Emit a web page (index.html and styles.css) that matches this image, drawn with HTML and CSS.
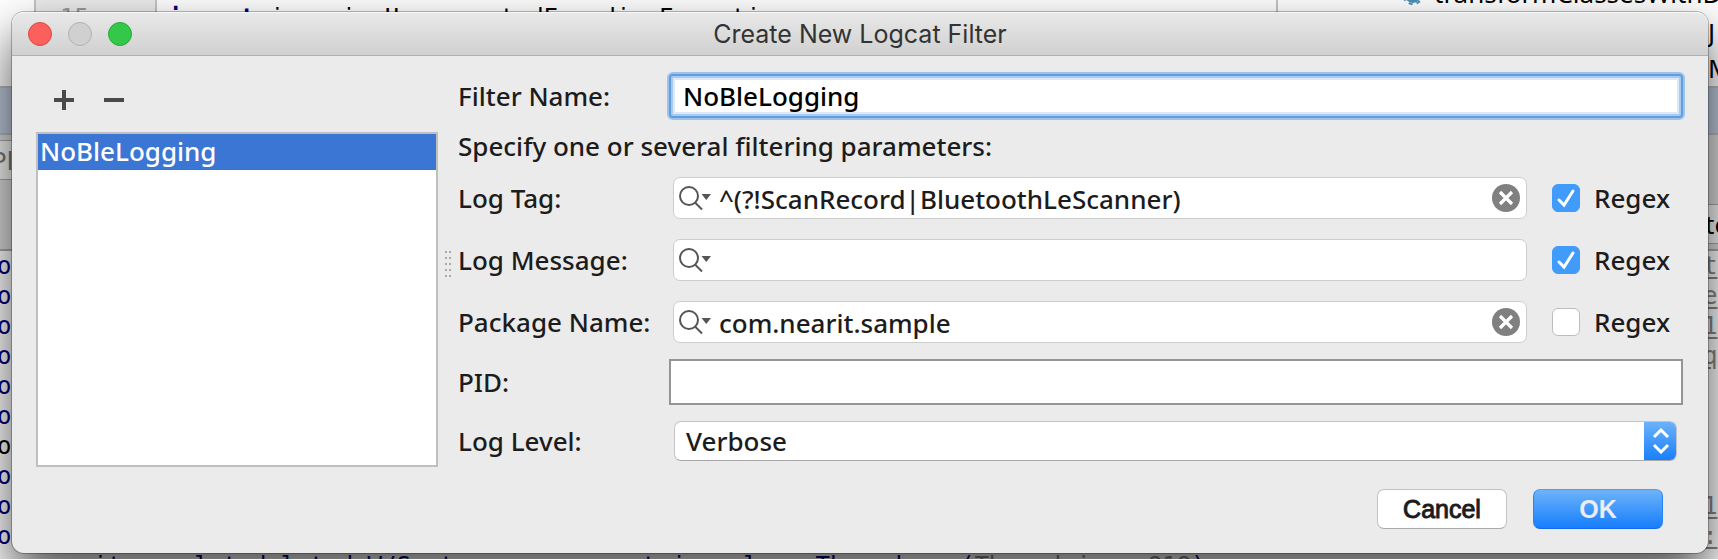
FILE: index.html
```
<!DOCTYPE html>
<html lang="en">
<head>
<meta charset="utf-8">
<title>Create New Logcat Filter</title>
<link rel="stylesheet" href="styles.css">
</head>
<body>
<svg class="defs" width="0" height="0" aria-hidden="true">
  <symbol id="search" viewBox="0 0 32 26">
    <circle cx="10" cy="11" r="9" fill="none" stroke="#555" stroke-width="2"/>
    <path d="M16 17.500L23 24.500" stroke="#555" stroke-width="2"/>
    <path d="M22.500 9H32L27.250 15Z" fill="#555"/>
  </symbol>
  <symbol id="clear" viewBox="0 0 28 28">
    <circle cx="14" cy="14" r="14" fill="#808080"/>
    <path d="M8 8L20 20M20 8L8 20" stroke="#fff" stroke-width="3.200"/>
  </symbol>
</svg>

<div class="ide">
  <div class="editor">
    <div class="gutter">15</div>
    <div class="code"><b>import</b> java.io.UnsupportedEncodingException;</div>
    <div class="tasks">
      <div class="task"><svg width="22" height="24" viewBox="0 0 22 24"><circle cx="11" cy="12" r="6" fill="none" stroke="#4c93b8" stroke-width="6"/><circle cx="11" cy="12" r="10" fill="none" stroke="#4c93b8" stroke-width="2" stroke-dasharray="4 4"/></svg>transformClassesWithD</div>
      <div class="task-edge">J</div>
      <div class="task-edge">M</div>
    </div>
  </div>
  <div class="tool-header"></div>
  <div class="tool-tabs">
    <div class="tabs-left"><span>Pl</span></div>
    <div class="tabs-right"><span>te</span></div>
  </div>
  <div class="console">
    <div class="line"><span>or</span><u>t</u></div>
    <div class="line"><span>or</span><u>e</u></div>
    <div class="line"><span>or</span><u>1</u></div>
    <div class="line"><span>or</span><u>q</u></div>
    <div class="line"><span>or</span></div>
    <div class="line"><span>or</span></div>
    <div class="line plain"><span>or</span></div>
    <div class="line"><span>or</span></div>
    <div class="line"><span>or</span><u>1</u></div>
    <div class="line"><span>or</span><u>:</u></div>
    <div class="line trace">it.completedeleted W/System.err:     at java.lang.Thread.run(<i>Thread.java:818</i>)</div>
  </div>
</div>

<form class="dialog">
  <header class="titlebar">
    <div class="lights">
      <button type="button" class="light close" aria-label="Close"></button>
      <button type="button" class="light minimize" aria-label="Minimize" disabled></button>
      <button type="button" class="light zoom" aria-label="Zoom"></button>
    </div>
    <h1>Create New Logcat Filter</h1>
  </header>

  <div class="content">
    <section class="filters">
      <div class="toolbar">
        <button type="button" aria-label="Add"><svg width="20" height="20"><path d="M0 10H20M10 0V20" stroke="#4a4a4a" stroke-width="4"/></svg></button>
        <button type="button" aria-label="Remove"><svg width="20" height="20"><path d="M0 10H20" stroke="#4a4a4a" stroke-width="4"/></svg></button>
      </div>
      <ul class="list"><li>NoBleLogging</li></ul>
    </section>

    <div class="splitter"><span class="grip"></span></div>

    <section class="fields">
      <div class="row name-row">
        <label for="name">Filter Name:</label>
        <input id="name" class="text focused" type="text" value="NoBleLogging">
      </div>
      <p class="hint">Specify one or several filtering parameters:</p>
      <div class="row search-row">
        <label for="tag">Log Tag:</label>
        <div class="search">
          <svg width="32" height="26"><use href="#search"/></svg>
          <input id="tag" type="text" value="^(?!ScanRecord|BluetoothLeScanner)">
          <button type="button" aria-label="Clear"><svg width="28" height="28"><use href="#clear"/></svg></button>
        </div>
        <label class="regex"><input type="checkbox" checked>Regex</label>
      </div>
      <div class="row search-row">
        <label for="message">Log Message:</label>
        <div class="search">
          <svg width="32" height="26"><use href="#search"/></svg>
          <input id="message" type="text">
        </div>
        <label class="regex"><input type="checkbox" checked>Regex</label>
      </div>
      <div class="row search-row">
        <label for="package">Package Name:</label>
        <div class="search">
          <svg width="32" height="26"><use href="#search"/></svg>
          <input id="package" type="text" value="com.nearit.sample">
          <button type="button" aria-label="Clear"><svg width="28" height="28"><use href="#clear"/></svg></button>
        </div>
        <label class="regex"><input type="checkbox">Regex</label>
      </div>
      <div class="row pid-row">
        <label for="pid">PID:</label>
        <input id="pid" class="text" type="text">
      </div>
      <div class="row level-row">
        <label for="level">Log Level:</label>
        <div class="combo">
          <select id="level"><option>Verbose</option></select>
          <span class="arrows"><svg width="18" height="26" viewBox="0 0 18 26"><path d="M2 9L9 2L16 9M2 17L9 24L16 17" fill="none" stroke="#fff" stroke-width="3"/></svg></span>
        </div>
      </div>
    </section>
  </div>

  <footer class="actions">
    <button type="button" class="btn">Cancel</button>
    <button type="submit" class="btn primary">OK</button>
  </footer>
</form>
</body>
</html>
```
FILE: styles.css
```
* { box-sizing: border-box; }
body {
  margin: 0;
  position: relative;
  overflow: hidden;
  background: #fff;
  color: #1c1c1c;
  font: 500 26px/32px "Noto Sans", "Open Sans", sans-serif;
}
button { padding: 0; border: 0; background: none; }
svg { display: block; flex: none; }
input, select { font: inherit; color: inherit; min-width: 0; }
.defs { position: absolute; }

/* IDE window behind the dialog */
.ide {
  position: absolute;
  inset: 0;
  display: flex;
  flex-direction: column;
  overflow: hidden;
  font-weight: 400;
}
.editor {
  display: flex;
  height: 86px;
  flex: none;
  padding-left: 34px;
  font: 24px/32px "DejaVu Sans Mono", monospace;
  color: #000;
}
.gutter {
  width: 123px;
  padding: 2px 0 0 24px;
  background: #ececec;
  border: solid #c4c4c4;
  border-width: 0 2px;
  color: #999;
}
.code { flex: 1; padding: 2px 0 0 11px; white-space: pre; }
.code b { color: #000080; }
.tasks {
  width: 442px;
  flex: none;
  overflow: hidden;
  border-left: 2px solid #c4c4c4;
  font: 26px/36px "Noto Sans", sans-serif;
}
.task { display: flex; align-items: center; gap: 10px; height: 15px; padding-left: 124px; line-height: 15px; margin-top: -14px; }
.task-edge { padding-left: 430px; height: 36px; }
.task + .task-edge { margin-top: 13px; }
.tool-header { height: 49px; flex: none; background: #bfc9dc; border: solid #bbb; border-width: 2px 0; }
.tool-tabs { display: flex; justify-content: space-between; height: 116px; flex: none; background: #ddd; }
.tabs-left, .tabs-right { color: #777; border-bottom: 2px solid #aaa; }
.tabs-left { width: 100px; padding-top: 5px; }
.tabs-left span { display: block; height: 40px; padding-top: 3px; text-indent: -9px; background: #f5f5f5; border: solid #aaa; border-width: 1px 0; }
.tabs-right { width: 10px; padding-top: 69px; color: #000; }
.tabs-right span { display: block; height: 40px; padding-top: 3px; text-indent: -3px; background: #f5f5f5; border: solid #aaa; border-width: 1px 0; }
.console { flex: none; background: #fff; font: 24px/30px "DejaVu Sans Mono", monospace; color: #000080; }
.line { display: flex; justify-content: space-between; height: 30px; text-indent: -3px; }
.line u { width: 11px; color: #888; text-indent: -4px; text-underline-offset: 3px; }
.plain { color: #000; }
.trace { display: block; padding-left: 96px; white-space: pre; }
.trace i { font-style: normal; color: #888; }

/* Dialog window */
.dialog {
  position: relative;
  margin: 12px 10px 6px 12px;
  padding-bottom: 24px;
  background: #ebebeb;
  border-radius: 12px;
  box-shadow: 0 0 0 1px rgba(0, 0, 0, .25), 0 24px 50px rgba(0, 0, 0, .7);
}
.titlebar {
  display: grid;
  grid-template-columns: 1fr auto 1fr;
  align-items: center;
  height: 44px;
  padding: 0 16px;
  border-bottom: 1px solid #b0b0b0;
  border-radius: 12px 12px 0 0;
  background: linear-gradient(#e9e9e9, #d0d0d0);
  box-shadow: inset 0 1px #f6f6f6;
}
.titlebar h1 { margin: 0; font: 400 25px/32px Inter, sans-serif; color: #333; }
.lights { display: flex; gap: 16px; }
.light { width: 24px; height: 24px; border-radius: 50%; }
.close { background: #fc605c; border: 1px solid #df4744; }
.minimize { background: #d0d0d0; border: 1px solid #b2b2b2; }
.zoom { background: #34c84a; border: 1px solid #27aa35; }

.content { display: flex; padding: 0 25px 0 24px; }
.filters { display: flex; flex-direction: column; width: 402px; padding-bottom: 4px; }
.toolbar { display: flex; gap: 30px; height: 76px; padding: 12px 18px 0; align-items: center; }
.list {
  flex: 1;
  margin: 0;
  padding: 0;
  list-style: none;
  background: #fff;
  border: 2px solid #bfbfbf;
}
.list li { height: 36px; padding: 1px 2px; background: #3c76d4; color: #fff; }
.splitter { display: flex; align-items: center; justify-content: center; width: 20px; }
.grip {
  width: 8px;
  height: 30px;
  background: radial-gradient(circle, #aaa 1px, transparent 1px) 0 0 / 4px 6px;
}

.fields { flex: 1; min-width: 0; padding-top: 16px; }
.row { display: grid; grid-template-columns: 211px 1fr; align-items: center; }
.name-row { height: 47px; }
.text {
  height: 46px;
  padding: 0 12px;
  background: #fff;
  border: 2px solid #949494;
  border-radius: 0;
  outline: none;
}
.text.focused {
  height: 44px;
  color: #000;
  border-color: #629edd;
  border-radius: 4px;
  box-shadow: 0 0 0 2px #9cc3ee, inset 0 0 0 2px #a9cbf0, inset 0 0 0 4px #dce9f8;
}
.hint { margin: 0; height: 48px; padding-top: 11px; }
.search-row { grid-template-columns: 211px 1fr 156px; padding: 10px 0; }
.search {
  display: flex;
  align-items: center;
  gap: 8px;
  height: 42px;
  margin-left: 4px;
  padding: 0 6px 0 5px;
  background: #fff;
  border: 1px solid #cdcdcd;
  border-radius: 7px;
}
.search input { flex: 1; height: 38px; padding: 2px 0 0; border: 0; background: none; outline: none; }
.regex { display: flex; align-items: center; gap: 14px; padding-left: 25px; }
.regex input {
  appearance: none;
  width: 28px;
  height: 28px;
  margin: 0;
  background: #fff;
  border: 1px solid #bdbdbd;
  border-radius: 6px;
}
.regex input:checked {
  border-color: #409bfa;
  background: #409bfa url("data:image/svg+xml,%3Csvg xmlns='http://www.w3.org/2000/svg' viewBox='0 0 26 26'%3E%3Cpath d='M6 15L11 20L20 6' fill='none' stroke='white' stroke-width='3' stroke-linecap='round'/%3E%3C/svg%3E") center / 26px;
}
.pid-row { padding: 6px 0; }
.level-row { padding: 10px 0; }
.combo {
  display: flex;
  height: 40px;
  margin: 0 6px 0 5px;
  overflow: hidden;
  background: #fff;
  border: 1px solid #c4c4c4;
  border-bottom-color: #a8a8a8;
  border-radius: 7px;
}
.combo select { flex: 1; padding: 0 11px; border: 0; background: none; appearance: none; outline: none; }
.arrows {
  display: flex;
  align-items: center;
  justify-content: center;
  width: 33px;
  margin: -1px;
  background: linear-gradient(#6db3fa, #167efc);
}

.actions { display: flex; justify-content: flex-end; gap: 26px; padding: 18px 45px 0 0; }
.btn {
  width: 130px;
  height: 40px;
  border: 1px solid #c2c2c2;
  border-bottom-color: #aaa;
  border-radius: 7px;
  background: #fff;
  color: #1c1c1c;
  font: 25px/32px "Liberation Sans", Arial, sans-serif;
  -webkit-text-stroke: 1px;
}
.primary {
  border-color: #4d9ef8 #2b84f6 #1468f0;
  background: linear-gradient(#6db3fa, #167efc);
  color: #ececf4;
  font-weight: 700;
  -webkit-text-stroke: 0;
}
```
